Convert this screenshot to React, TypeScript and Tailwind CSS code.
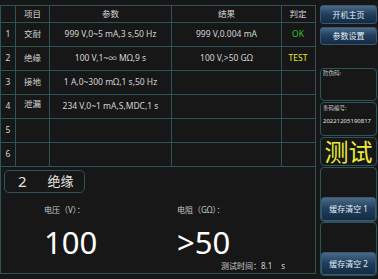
import React from 'react'

const rows = [
  { n: '1', item: '交耐', param: '999 V,0~5 mA,3 s,50 Hz', result: '999 V,0.004 mA', verdict: 'OK' },
  { n: '2', item: '绝缘', param: '100 V,1~∞ MΩ,9 s', result: '100 V,>50 GΩ', verdict: 'TEST' },
  { n: '3', item: '接地', param: '1 A,0~300 mΩ,1 s,50 Hz', result: '', verdict: '' },
  { n: '4', item: '泄漏', param: '234 V,0~1 mA,S,MDC,1 s', result: '', verdict: '' },
  { n: '5', item: '', param: '', result: '', verdict: '' },
  { n: '6', item: '', param: '', result: '', verdict: '' },
]

const cols = 'grid grid-cols-[15px_34px_122px_110px_32px]'
const cell = 'flex items-center justify-center border-r border-[#2b5559] last:border-r-0'

function BlueBtn({ label, h }: { label: string; h: string }) {
  return (
    <div className={`${h} w-full rounded-[3px] border border-[#3a5670] bg-gradient-to-b from-[#4a6a88] via-[#1f3d5a] to-[#142c44] flex items-center justify-center text-[8px] text-[#e6eef5] whitespace-nowrap`}>
      {label}
    </div>
  )
}

export default function App() {
  return (
    <div
      className="w-[378px] h-[279px] bg-[#171717] flex pt-[5px] overflow-hidden text-[#d4d4d4]"
      style={{ fontFamily: '"Noto Sans", "Noto Sans CJK SC", sans-serif' }}
    >
      {/* left panel */}
      <div className="w-[316px] h-[269px] border border-[#2b5559] flex flex-col">
        <div className={`${cols} h-[17px] border-b border-[#2b5559] text-[8.5px]`}>
          <div className={cell}></div>
          <div className={cell}>项目</div>
          <div className={cell}>参数</div>
          <div className={cell}>结果</div>
          <div className={cell}>判定</div>
        </div>
        {rows.map(r => (
          <div key={r.n} className={`${cols} h-[24px] border-b border-[#2b5559] text-[8.5px]`}>
            <div className={cell}>{r.n}</div>
            <div className={`${cell} ${r.n === '4' ? 'items-start pt-[3px]' : ''}`}>{r.item}</div>
            <div className={cell}>{r.param}</div>
            <div className={cell}>{r.result}</div>
            <div className={`${cell} ${r.verdict === 'OK' ? 'text-[#2fc32f]' : 'text-[#e4e43c]'}`}>{r.verdict}</div>
          </div>
        ))}

        {/* detail */}
        <div className="flex-1 relative px-[3px] pt-[3px]">
          <div className="w-[81px] h-[23px] rounded-[5px] border border-[#2b5559] flex items-center text-[#e2e2e2]">
            <span className="ml-[13px] text-[15px] leading-none">2</span>
            <span className="ml-[21px] text-[13px] leading-none">绝缘</span>
          </div>
          <div className="flex mt-[11px] ml-[40px]">
            <div className="w-[133px] flex flex-col">
              <span className="text-[8px] text-[#c8c8c8]">电压（V）：</span>
              <span className="text-[31px] leading-none mt-[11px] text-white">100</span>
            </div>
            <div className="flex flex-col">
              <span className="text-[8px] text-[#c8c8c8]">电阻（GΩ）：</span>
              <span className="text-[31px] leading-none mt-[11px] text-white">&gt;50</span>
            </div>
          </div>
          <div className="absolute left-[220px] bottom-[3px] text-[8px] leading-none text-[#d0d0d0]">
            测试时间：8.1<span className="ml-[9px]">s</span>
          </div>
        </div>
      </div>

      {/* right column */}
      <div className="w-[57px] ml-[4px] flex flex-col">
        <BlueBtn label="开机主页" h="h-[19px]" />
        <div className="mt-[3px]">
          <BlueBtn label="参数设置" h="h-[18px]" />
        </div>
        <div className="mt-[23px] h-[33px] rounded-[4px] border border-[#2b5559] px-[2px] pt-[2px] text-[5.5px] text-[#c8c8c8] leading-none">
          防伪码:
        </div>
        <div className="mt-[1px] h-[34px] rounded-[4px] border border-[#2b5559] px-[2px] pt-[3px] flex flex-col leading-none">
          <span className="text-[5.5px] text-[#c8c8c8]">条码编号:</span>
          <span className="text-[6px] text-[#e0e0e0] mt-[6px]">20221205190817</span>
        </div>
        <div className="mt-[1px] h-[29px] rounded-[4px] border border-[#2b5559] flex items-center justify-center text-[24px] leading-none text-[#ecec3a]">
          测试
        </div>
        <div className="mt-[1px] h-[55px] rounded-[4px] border border-[#2b5559] flex flex-col justify-end">
          <BlueBtn label="缓存清空 1" h="h-[24px]" />
        </div>
        <div className="h-[54px] rounded-[4px] border border-[#2b5559] flex flex-col justify-end">
          <BlueBtn label="缓存清空 2" h="h-[23px]" />
        </div>
      </div>
    </div>
  )
}
